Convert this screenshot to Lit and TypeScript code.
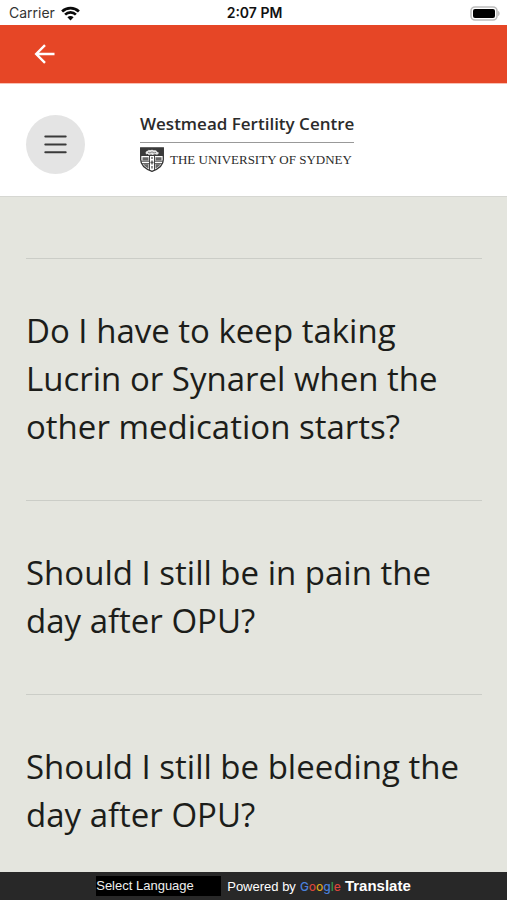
import { LitElement, html, css } from "lit";
import { customElement, state } from "lit/decorators.js";

@customElement("status-bar")
class StatusBar extends LitElement {
  static styles = css`
    :host {
      display: grid;
      grid-template-columns: 1fr auto 1fr;
      align-items: center;
      height: 25px;
      padding: 1px 7px 0 9px;
      box-sizing: border-box;
      background: #fff;
      color: #111;
      font: 14px/24px Inter, sans-serif;
      flex: none;
    }
    .carrier {
      display: flex;
      align-items: center;
      gap: 6px;
      color: #333;
    }
    .time {
      font-weight: 600;
    }
    .battery {
      justify-self: end;
    }
    svg {
      display: block;
    }
  `;
  render() {
    return html`
      <div class="carrier">
        <span>Carrier</span>
        <svg width="19" height="15" viewBox="0 0 19 15" fill="none" stroke="#0a0a0a" stroke-width="2.7" aria-hidden="true">
          <path d="M1.1 5.4C5.8.9 13.2.9 17.9 5.4" />
          <path d="M4.1 8.6c3-2.9 7.8-2.9 10.8 0" />
          <path d="M9.5 14.4 6.4 11.2c1.7-1.6 4.5-1.6 6.2 0z" fill="#0a0a0a" stroke="none" />
        </svg>
      </div>
      <span class="time">2:07 PM</span>
      <svg class="battery" width="30" height="15" viewBox="0 0 30 15" aria-hidden="true">
        <rect x="1" y="1" width="26" height="13" rx="4" fill="#fff" stroke="#bdbdbd" stroke-width="1.6" />
        <rect x="3" y="3" width="22" height="9" rx="2" fill="#000" />
        <path d="M28.3 5v5c1.6-.6 1.6-4.400 0-5z" fill="#a8a8a8" />
      </svg>
    `;
  }
}

@customElement("site-logo")
class SiteLogo extends LitElement {
  static styles = css`
    :host {
      display: block;
    }
    a {
      display: block;
      color: #2b2b2b;
      text-decoration: none;
    }
    .name {
      display: block;
      font: 600 17px/24px "Open Sans", sans-serif;
      padding-bottom: 6px;
      border-bottom: 1px solid #999;
      white-space: nowrap;
    }
    .university {
      display: flex;
      align-items: center;
      gap: 6px;
      padding: 4px 0 2px;
      font: 13px/24px "Liberation Serif", serif;
      white-space: nowrap;
    }
  `;
  render() {
    return html`
      <a href="#home">
        <span class="name">Westmead Fertility Centre</span>
        <span class="university">
          <svg width="24" height="25" viewBox="0 0 24 25" aria-hidden="true">
            <path d="M.7.8h22.600v12c0 5.600-4.800 9.200-11.300 11.500C5.500 22 .7 18.400.7 12.800z" fill="#fff" stroke="#333" stroke-width="1.300" />
            <path d="M1 1h22v8H1z" fill="#3a3a3a" />
            <path d="M5.500 6c.6-2.600 2.600-1.600 3.300-3.200 1.500 1.200 2.500-.6 4 .2s3-.5 4 1.300 2.200.3 1.800 2-2 1.600-3.200 1-2 1.200-3.500.4-3 .8-3.600-.1S6.300 8 5.500 6z" fill="#e4e4e4" />
            <path d="M8 5.200l2 .8 2-1.200 2 1.200 2-.6" fill="none" stroke="#555" stroke-width=".7" />
            <path d="M2.500 10.200h6v3.200h-6zM15.500 10.200h6v3.200h-6zM3.500 17.200h5v4.200c-2.300-1-4-2.500-5-4.200zM15.500 17.200h5c-1 1.700-2.700 3.200-5 4.200z" fill="#666" />
            <path d="M9.500 9v14M14.500 9v14M1 14.200h8.500M14.500 14.200H23M2 16.700h7.500M14.500 16.700H22" stroke="#444" />
            <path d="M12 10v2M12 13.500v4M10.500 15.500h3M12 19v2.500" stroke="#555" stroke-width="1.300" />
          </svg>
          THE UNIVERSITY OF SYDNEY
        </span>
      </a>
    `;
  }
}

@customElement("faq-list")
class FaqList extends LitElement {
  static styles = css`
    :host {
      display: block;
      padding: 61px 25px 0 26px;
    }
    h2 {
      margin: 0;
      border-top: 1px solid #cbcdc7;
    }
    button {
      display: block;
      width: 100%;
      margin: 0;
      padding: 48px 0 49px;
      border: 0;
      background: none;
      color: #1c1d1a;
      font: 33px/48px "Open Sans", sans-serif;
      text-align: left;
      cursor: pointer;
    }
  `;
  @state() questions = [
    "Do I have to keep taking Lucrin or Synarel when the other medication starts?",
    "Should I still be in pain the day after OPU?",
    "Should I still be bleeding the day after OPU?",
  ];
  render() {
    return this.questions.map(
      (q) => html`<h2><button type="button">${q}</button></h2>`
    );
  }
}

@customElement("translate-bar")
class TranslateBar extends LitElement {
  static styles = css`
    :host {
      display: flex;
      align-items: center;
      justify-content: center;
      gap: 6px;
      height: 28px;
      flex: none;
      background: #282828;
      color: #fff;
      font: 13px/20px "Liberation Sans", sans-serif;
      white-space: nowrap;
    }
    select {
      appearance: none;
      width: 125px;
      height: 20px;
      margin: 0;
      padding: 0;
      border: 0;
      border-radius: 0;
      background: #000;
      color: #eee;
      font: 13px/20px "Liberation Sans", sans-serif;
    }
    .powered,
    a {
      display: flex;
      align-items: baseline;
      gap: 4px;
    }
    a {
      color: #fff;
      font-weight: 700;
      font-size: 15px;
      text-decoration: none;
    }
    .google {
      font: 500 12px/20px Inter, sans-serif;
    }
    .blue { color: #4a80dc; }
    .red { color: #d8453a; }
    .yellow { color: #dba51c; }
    .green { color: #35974e; }
  `;
  render() {
    return html`
      <select aria-label="Select Language">
        <option>Select Language</option>
      </select>
      <span class="powered">
        Powered by
        <a href="#translate"
          ><span class="google"
            ><span class="blue">G</span><span class="red">o</span><span class="yellow">o</span
            ><span class="blue">g</span><span class="green">l</span><span class="red">e</span></span
          ><span>Translate</span></a
        >
      </span>
    `;
  }
}

@customElement("app-root")
class AppRoot extends LitElement {
  static styles = css`
    :host {
      display: flex;
      flex-direction: column;
      height: 100vh;
      background: #e4e5de;
    }
    .toolbar {
      flex: none;
      display: flex;
      align-items: center;
      height: 58px;
      padding: 0 32px;
      background: #e64626;
      border-bottom: 1px solid #f9c0b3;
    }
    button {
      display: grid;
      place-items: center;
      margin: 0;
      padding: 0;
      border: 0;
      background: none;
      cursor: pointer;
    }
    .back {
      width: 26px;
      height: 26px;
    }
    .header {
      flex: none;
      display: flex;
      align-items: flex-end;
      gap: 55px;
      box-sizing: border-box;
      height: 113px;
      padding: 0 26px 22px;
      background: #fff;
      border-bottom: 1px solid #d6d7d2;
    }
    .menu {
      width: 59px;
      height: 59px;
      border-radius: 50%;
      background: #e4e4e4;
    }
    main {
      flex: 1;
      min-height: 0;
      overflow-y: auto;
      scrollbar-width: none;
    }
  `;
  render() {
    return html`
      <status-bar></status-bar>
      <nav class="toolbar">
        <button class="back" type="button" aria-label="Back">
          <svg width="22" height="20" viewBox="0 0 22 20" fill="none" stroke="#fff" stroke-width="2.400" aria-hidden="true">
            <path d="M20.500 10H2.500M11 1.200 2.200 10l8.800 8.800" />
          </svg>
        </button>
      </nav>
      <header class="header">
        <button class="menu" type="button" aria-label="Menu">
          <svg width="23" height="19" viewBox="0 0 23 19" stroke="#3a3a3a" stroke-width="2" stroke-linecap="round" aria-hidden="true">
            <path d="M1.300 1.500h20.400M1.300 9.500h20.400M1.300 17.300h20.400" />
          </svg>
        </button>
        <site-logo></site-logo>
      </header>
      <main><faq-list></faq-list></main>
      <translate-bar></translate-bar>
    `;
  }
}
